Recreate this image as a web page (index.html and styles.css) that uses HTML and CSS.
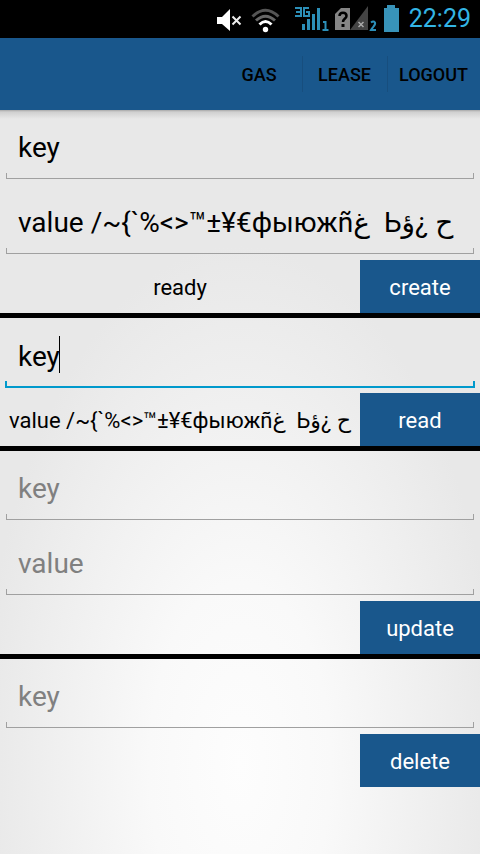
FILE: index.html
```html
<!DOCTYPE html>
<html lang="en">
<head>
<meta charset="utf-8">
<meta name="viewport" content="width=device-width, initial-scale=1">
<title>Key value store</title>
<link rel="stylesheet" href="styles.css">
</head>
<body>
<div class="status">
  <svg class="status-icons" width="184" height="38" viewBox="216 0 184 38" aria-hidden="true">
    <path d="M217 17h5l8-8v22l-8-7h-5z" fill="#fff"/>
    <path d="M232.500 16.500l8 8m0-8l-8 8" stroke="#eee" stroke-width="2" fill="none"/>
    <g fill="none" stroke-width="3">
      <path d="M252.500 16.500q13-12.500 26 0" stroke="#555"/>
      <path d="M256 20.500q9.500-8.500 19 0" stroke="#666"/>
      <path d="M259.500 24.500q6-6 12 0" stroke="#fff"/>
    </g>
    <circle cx="265.500" cy="29.500" r="2.700" fill="#fff"/>
    <g fill="none" stroke="#2c8fb8" stroke-width="2">
      <path d="M295 8h6v8h-6m1-4h5M309 8h-5v8h5v-4h-3"/>
    </g>
    <path d="M302 24h3v6h-3zM307 19h3v11h-3zM312 14h3v16h-3zM317 8h3v22h-3z" fill="#2c8fb8"/>
    <path d="M323 22h2.500v8m-3 0h6" fill="none" stroke="#2c8fb8" stroke-width="2"/>
    <path d="M341 8h9v22h-15V14z" fill="#858585"/>
    <path d="M339.500 16c0-4.500 7-4.500 7 0 0 2.500-3.500 2.500-3.500 6" stroke="#000" stroke-width="2.500" fill="none"/>
    <path d="M341.500 24h3v3h-3z"/>
    <path d="M368 6v24h-18z" fill="#444"/>
    <path d="M358.500 22l5 5m0-5l-5 5" stroke="#aaa" stroke-width="1.500"/>
    <path d="M371 22.500q2.500-2 4 0c1 2.500-2 4-4 7.500h5" fill="none" stroke="#2c8fb8" stroke-width="2"/>
    <path d="M387 5h8v3h4v24h-15V8h3z" fill="#3893b9"/>
  </svg>
  <time class="clock">22:29</time>
</div>
<nav class="bar">
  <button class="action" type="button">GAS</button>
  <button class="action" type="button">LEASE</button>
  <button class="action" type="button">LOGOUT</button>
</nav>
<main class="content">
  <form class="panel">
    <div class="field"><input class="input" type="text" placeholder="key" aria-label="Key to create" value="key"></div>
    <div class="field"><input class="input" type="text" placeholder="value" aria-label="Value to create" value="value /~{`%&lt;&gt;™±¥€фыюжñغ  Ьح ¿ؤ"></div>
    <div class="row"><output class="result">ready</output><button class="run" type="button">create</button></div>
  </form>
  <form class="panel">
    <div class="field field-active"><input class="input" type="text" placeholder="key" aria-label="Key to read" value="key"><span class="caret"></span></div>
    <div class="row"><output class="result">value /~{`%&lt;&gt;™±¥€фыюжñغ  Ьح ¿ؤ</output><button class="run" type="button">read</button></div>
  </form>
  <form class="panel">
    <div class="field"><input class="input" type="text" placeholder="key" aria-label="Key to update"></div>
    <div class="field"><input class="input" type="text" placeholder="value" aria-label="Value to update"></div>
    <div class="row"><output class="result"></output><button class="run" type="button">update</button></div>
  </form>
  <form class="panel">
    <div class="field"><input class="input" type="text" placeholder="key" aria-label="Key to delete"></div>
    <div class="row"><output class="result"></output><button class="run" type="button">delete</button></div>
  </form>
</main>
</body>
</html>
```
FILE: styles.css
```css
* {
  box-sizing: border-box;
}

body {
  margin: 0;
  min-height: 100vh;
  display: flex;
  flex-direction: column;
  font-family: Roboto, "Noto Sans", "DejaVu Sans", sans-serif;
  color: #000;
  background: #e8e8e8;
}

button,
input {
  font: inherit;
  color: inherit;
  border: 0;
  border-radius: 0;
  margin: 0;
  background: none;
}

.status {
  height: 38px;
  display: flex;
  align-items: center;
  justify-content: flex-end;
  gap: 9px;
  padding-right: 9px;
  background: #000;
}

.clock {
  font-size: 25px;
  line-height: 38px;
  color: #33b5e5;
}

.bar {
  height: 72px;
  display: flex;
  align-items: center;
  justify-content: flex-end;
  background: #19578c;
}

.action {
  height: 36px;
  min-width: 85px;
  padding: 0 12px 0 11px;
  font-size: 18px;
  font-weight: 500;
}

.action + .action {
  border-left: 1px solid #174e7e;
}

.content {
  flex: 1;
  background:
    linear-gradient(#a8a8a8, #d0d0d0 2px, rgba(232, 232, 232, 0) 9px),
    radial-gradient(ellipse 260px 520px at 50% 88%, #fdfdfd, #f9f9f9 35%, #e8e8e8);
}

.panel + .panel {
  border-top: 5px solid #000;
}

.field {
  position: relative;
  height: 75px;
  padding: 0 6px 6px;
}

.input {
  display: block;
  width: 100%;
  height: 69px;
  padding: 6px 12px 0;
  font-size: 28px;
  outline: 0;
  background:
    linear-gradient(#a0a0a0, #a0a0a0) left bottom / 100% 1px no-repeat,
    linear-gradient(#a0a0a0, #a0a0a0) left bottom / 1px 6px no-repeat,
    linear-gradient(#a0a0a0, #a0a0a0) right bottom / 1px 6px no-repeat;
}

.input::placeholder {
  color: #808080;
  opacity: 1;
}

.field-active {
  padding: 0 5px 5px;
}

.field-active .input {
  height: 70px;
  padding: 6px 13px 0;
  background:
    linear-gradient(#0099cc, #0099cc) left bottom / 100% 2px no-repeat,
    linear-gradient(#0099cc, #0099cc) left bottom / 2px 7px no-repeat,
    linear-gradient(#0099cc, #0099cc) right bottom / 2px 7px no-repeat;
}

.caret {
  position: absolute;
  left: 59px;
  top: 18px;
  width: 1px;
  height: 37px;
  background: #000;
}

.row {
  display: flex;
  height: 53px;
}

.result {
  flex: 3;
  min-width: 0;
  font-size: 22px;
  line-height: 56px;
  text-align: center;
  white-space: pre;
}

.run {
  flex: 1;
  padding: 2px 0 0;
  font-size: 22px;
  color: #fff;
  background: #19578c;
}
```
